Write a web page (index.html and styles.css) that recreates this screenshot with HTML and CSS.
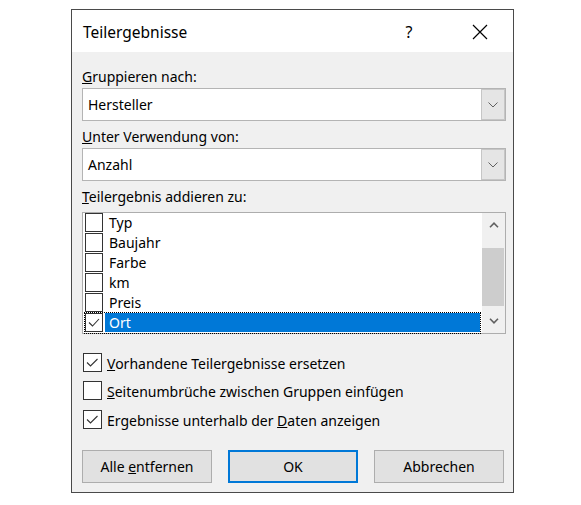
FILE: index.html
```html
<!DOCTYPE html>
<html lang="de">
<head>
<meta charset="utf-8">
<title>Teilergebnisse</title>
<link rel="stylesheet" href="styles.css">
</head>
<body>
<div class="page">
  <div class="dialog">
    <div class="titlebar">
      <span class="title">Teilergebnisse</span>
      <span class="help">?</span>
      <span class="close"><svg width="16" height="16" viewBox="0 0 16 16"><path d="M1 1 L15 15 M15 1 L1 15" stroke="#000" stroke-width="1.2" fill="none"/></svg></span>
    </div>
    <div class="content">
      <div class="label"><u>G</u>ruppieren nach:</div>
      <div class="combo">
        <span class="combo-text">Hersteller</span>
        <span class="combo-btn"><svg width="10" height="6" viewBox="0 0 10 6"><path d="M0.5 0.5 L5 5 L9.5 0.5" stroke="#606060" stroke-width="1" fill="none"/></svg></span>
      </div>
      <div class="label after"><u>U</u>nter Verwendung von:</div>
      <div class="combo">
        <span class="combo-text">Anzahl</span>
        <span class="combo-btn"><svg width="10" height="6" viewBox="0 0 10 6"><path d="M0.5 0.5 L5 5 L9.5 0.5" stroke="#606060" stroke-width="1" fill="none"/></svg></span>
      </div>
      <div class="label after list-label"><u>T</u>eilergebnis addieren zu:</div>
      <div class="list">
        <div class="items">
          <div class="item"><span class="cb"></span><span class="item-text">Typ</span></div>
          <div class="item"><span class="cb"></span><span class="item-text">Baujahr</span></div>
          <div class="item"><span class="cb"></span><span class="item-text">Farbe</span></div>
          <div class="item"><span class="cb"></span><span class="item-text">km</span></div>
          <div class="item"><span class="cb"></span><span class="item-text">Preis</span></div>
          <div class="item focus"><span class="cb"><svg width="16" height="17" viewBox="0 0 16 17"><path d="M3 8.5 L6.5 12 L13 5" stroke="#333" stroke-width="1.1" fill="none"/></svg></span><span class="item-text selected">Ort</span></div>
        </div>
        <div class="scrollbar">
          <div class="sb-arrow"><svg width="10" height="6" viewBox="0 0 10 6"><path d="M1 5.2 L5 1.2 L9 5.2" stroke="#606060" stroke-width="1.6" fill="none"/></svg></div>
          <div class="sb-track"><div class="sb-thumb"></div></div>
          <div class="sb-arrow"><svg width="10" height="6" viewBox="0 0 10 6"><path d="M1 0.8 L5 4.8 L9 0.8" stroke="#606060" stroke-width="1.6" fill="none"/></svg></div>
        </div>
      </div>
      <div class="options">
        <div class="opt"><span class="cb"><svg width="17" height="17" viewBox="0 0 17 17"><path d="M3 8.5 L6.5 12 L13.5 5" stroke="#333" stroke-width="1.1" fill="none"/></svg></span><span class="opt-text"><u>V</u>orhandene Teilergebnisse ersetzen</span></div>
        <div class="opt"><span class="cb"></span><span class="opt-text"><u>S</u>eitenumbrüche zwischen Gruppen einfügen</span></div>
        <div class="opt third"><span class="cb"><svg width="17" height="17" viewBox="0 0 17 17"><path d="M3 8.5 L6.5 12 L13.5 5" stroke="#333" stroke-width="1.1" fill="none"/></svg></span><span class="opt-text">Ergebnisse unterhalb der <u>D</u>aten anzeigen</span></div>
      </div>
      <div class="buttons">
        <div class="btn"><span>Alle <u>e</u>ntfernen</span></div>
        <div class="btn default"><span>OK</span></div>
        <div class="btn"><span>Abbrechen</span></div>
      </div>
    </div>
  </div>
</div>
</body>
</html>
```
FILE: styles.css
```css
body {
  margin: 0;
  background: #ffffff;
  font-family: "Noto Sans", "Open Sans", sans-serif;
  font-size: 14px;
  color: #000;
}

.page {
  padding: 9px 0 0 71px;
}

.dialog {
  width: 443px;
  height: 484px;
  box-sizing: border-box;
  border: 1px solid #4a4a4a;
  background: #f0f0f0;
  display: flex;
  flex-direction: column;
}

.titlebar {
  height: 42px;
  flex: none;
  background: #fff;
  display: flex;
  align-items: center;
  padding: 2px 25px 0 11px;
  box-sizing: border-box;
}

.title {
  flex: 1;
  font-size: 15.5px;
}

.help {
  width: 16px;
  text-align: center;
  font-size: 16px;
  margin-right: 55px;
}

.close {
  width: 16px;
  height: 16px;
  display: flex;
}

.content {
  flex: 1;
  padding: 15px 7px 0 10px;
}

.label {
  line-height: 20px;
  margin-bottom: 1px;
}

.label.after {
  margin-top: 6px;
}

.label.list-label {
  margin-bottom: 5px;
}

.combo {
  height: 33px;
  box-sizing: border-box;
  border: 1px solid #b4b4b4;
  background: #fff;
  display: flex;
  align-items: stretch;
}

.combo-text {
  flex: 1;
  padding-left: 5px;
  display: flex;
  align-items: center;
}

.combo-btn {
  width: 24px;
  box-sizing: border-box;
  border: 1px solid #c6c6c6;
  background: #e5e5e5;
  display: flex;
  align-items: center;
  justify-content: center;
}

.list {
  height: 122px;
  box-sizing: border-box;
  border: 1px solid #adadad;
  background: #fff;
  display: flex;
}

.items {
  flex: 1;
  padding: 0 2px 0 2px;
}

.item {
  height: 20px;
  display: flex;
  align-items: stretch;
}

.item .cb {
  height: 19px;
}

.cb {
  width: 18px;
  height: 18px;
  flex: none;
  box-sizing: border-box;
  border: 1px solid #333;
  background: #fff;
  display: flex;
  align-items: center;
  justify-content: center;
}

.item-text {
  flex: 1;
  margin-left: 2px;
  padding-left: 4px;
  line-height: 19px;
  height: 19px;
}

.item-text.selected {
  background: #0078d7;
  color: #fff;
}

.item.focus {
  outline: 1px dotted #000;
  outline-offset: 0;
}

.scrollbar {
  width: 23px;
  background: #f0f0f0;
  display: flex;
  flex-direction: column;
}

.sb-arrow {
  height: 24px;
  display: flex;
  align-items: center;
  justify-content: center;
}

.sb-track {
  flex: 1;
}

.sb-thumb {
  margin: 11px 1px 0 0;
  height: 58px;
  background: #cdcdcd;
}

.options {
  margin-top: 19px;
  display: flex;
  flex-direction: column;
  gap: 9px;
}

.opt {
  display: flex;
  align-items: center;
  height: 19px;
}

.opt.third {
  margin-top: 1px;
}

.opt .cb {
  width: 19px;
  height: 19px;
  margin-left: 1px;
}

.opt-text {
  margin-left: 5px;
  padding-top: 1px;
}

.buttons {
  margin-top: 21px;
  display: grid;
  grid-template-columns: 130px 130px 130px;
  column-gap: 16px;
}

.btn {
  height: 33px;
  box-sizing: border-box;
  border: 1px solid #adadad;
  background: #e1e1e1;
  display: flex;
  align-items: center;
  justify-content: center;
}

.btn.default {
  border: 2px solid #0078d7;
}
```
